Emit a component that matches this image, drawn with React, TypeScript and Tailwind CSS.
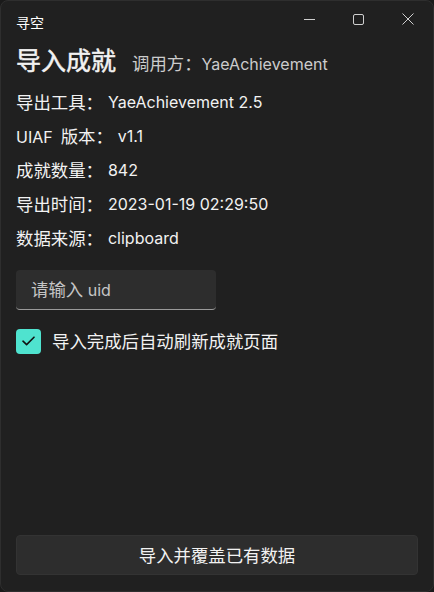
import React from "react";

const FONT = {
  fontFamily: '"Segoe UI", Inter, "Noto Sans CJK SC", sans-serif',
};

// CJK glyphs in the original are a touch larger than the latin ones
function Mixed({ text, cjk = "text-[17.4px]" }: { text: string; cjk?: string }) {
  const parts = text.match(/[\u0000-\u007f]+|[^\u0000-\u007f]+/g) ?? [];
  return (
    <span>
      {parts.map((p, i) =>
        /^[\u0000-\u007f]+$/.test(p) ? (
          <span key={i}>{p}</span>
        ) : (
          <span key={i} className={cjk} style={{ fontFamily: '"Noto Sans CJK SC", sans-serif' }}>
            {p}
          </span>
        )
      )}
    </span>
  );
}

const rows: [string, string][] = [
  ["导出工具：", "YaeAchievement 2.5"],
  ["UIAF \u2009版本：", "v1.1"],
  ["成就数量：", "842"],
  ["导出时间：", "2023-01-19 02:29:50"],
  ["数据来源：", "clipboard"],
];

export default function App() {
  return (
    <div className="w-[434px] h-[592px] bg-[#1a1a1a]" style={FONT}>
      <div className="flex flex-col w-full h-full rounded-[8px] border border-[#2e2e2e] bg-[#202020] text-[#f2f2f2] overflow-hidden">
        {/* Title bar */}
        <div className="flex h-[38px] shrink-0">
          <span className="pl-[15px] pt-[12px] text-[14px] leading-[18px] text-white" style={{ fontFamily: '"Noto Sans CJK SC", sans-serif' }}>
            寻空
          </span>
          <div className="ml-auto flex items-start h-full pr-[1px]">
            <div className="w-[49px] h-[36px] flex items-center justify-center">
              <svg width="11" height="11" viewBox="0 0 11 11">
                <path d="M0 5.5h11" stroke="#cfcfcf" strokeWidth="1" />
              </svg>
            </div>
            <div className="w-[49px] h-[36px] flex items-center justify-center">
              <svg width="11" height="11" viewBox="0 0 11 11">
                <rect x="0.5" y="0.5" width="10" height="10" rx="1.5" fill="none" stroke="#cfcfcf" strokeWidth="1" />
              </svg>
            </div>
            <div className="w-[49px] h-[36px] flex items-center justify-center">
              <svg width="12" height="12" viewBox="0 0 12 12">
                <path d="M0.5 0.5l11 11M11.5 0.5l-11 11" stroke="#cfcfcf" strokeWidth="1" />
              </svg>
            </div>
          </div>
        </div>

        <div className="flex flex-col flex-1 px-[15px]">
          {/* Heading */}
          <div className="flex items-baseline mt-[2px]">
            <h1
              className="text-[25px] font-normal leading-[36px] [-webkit-text-stroke:0.5px_#f2f2f2]"
              style={{ fontFamily: '"Noto Sans CJK SC", sans-serif' }}
            >
              导入成就
            </h1>
            <span className="ml-[16px] text-[16px] text-[#cccccc]">
              <Mixed text="调用方：YaeAchievement" />
            </span>
          </div>

          {/* Info rows */}
          <div className="flex flex-col mt-[8px]">
            {rows.map(([k, v]) => (
              <div key={k} className="flex items-center h-[34px] text-[16px]">
                <Mixed text={k} />
                <span className="ml-[5px]">{v}</span>
              </div>
            ))}
          </div>

          {/* UID input */}
          <div className="mt-[15px] w-[200px] h-[40px] rounded-[4px] bg-[#2d2d2d] border-b border-[#9a9a9a] flex items-center px-[15px] text-[16px] text-[#c5c5c5]">
            <Mixed text="请输入 uid" />
          </div>

          {/* Checkbox */}
          <div className="flex items-center mt-[18px] gap-[11px]">
            <div className="w-[25px] h-[25px] rounded-[4px] bg-[#4fe3cf] flex items-center justify-center">
              <svg width="13" height="10" viewBox="0 0 13 10">
                <path d="M1 5.2l3.6 3.4L12 1.2" fill="none" stroke="#111" strokeWidth="1.6" strokeLinecap="round" strokeLinejoin="round" />
              </svg>
            </div>
            <span className="text-[16px]">
              <Mixed text="导入完成后自动刷新成就页面" />
            </span>
          </div>

          {/* Bottom button */}
          <div className="mt-auto mb-[16px] h-[40px] rounded-[4px] bg-[#2d2d2d] border border-[#333333] flex items-center justify-center text-[16px]">
            <Mixed text="导入并覆盖已有数据" />
          </div>
        </div>
      </div>
    </div>
  );
}
